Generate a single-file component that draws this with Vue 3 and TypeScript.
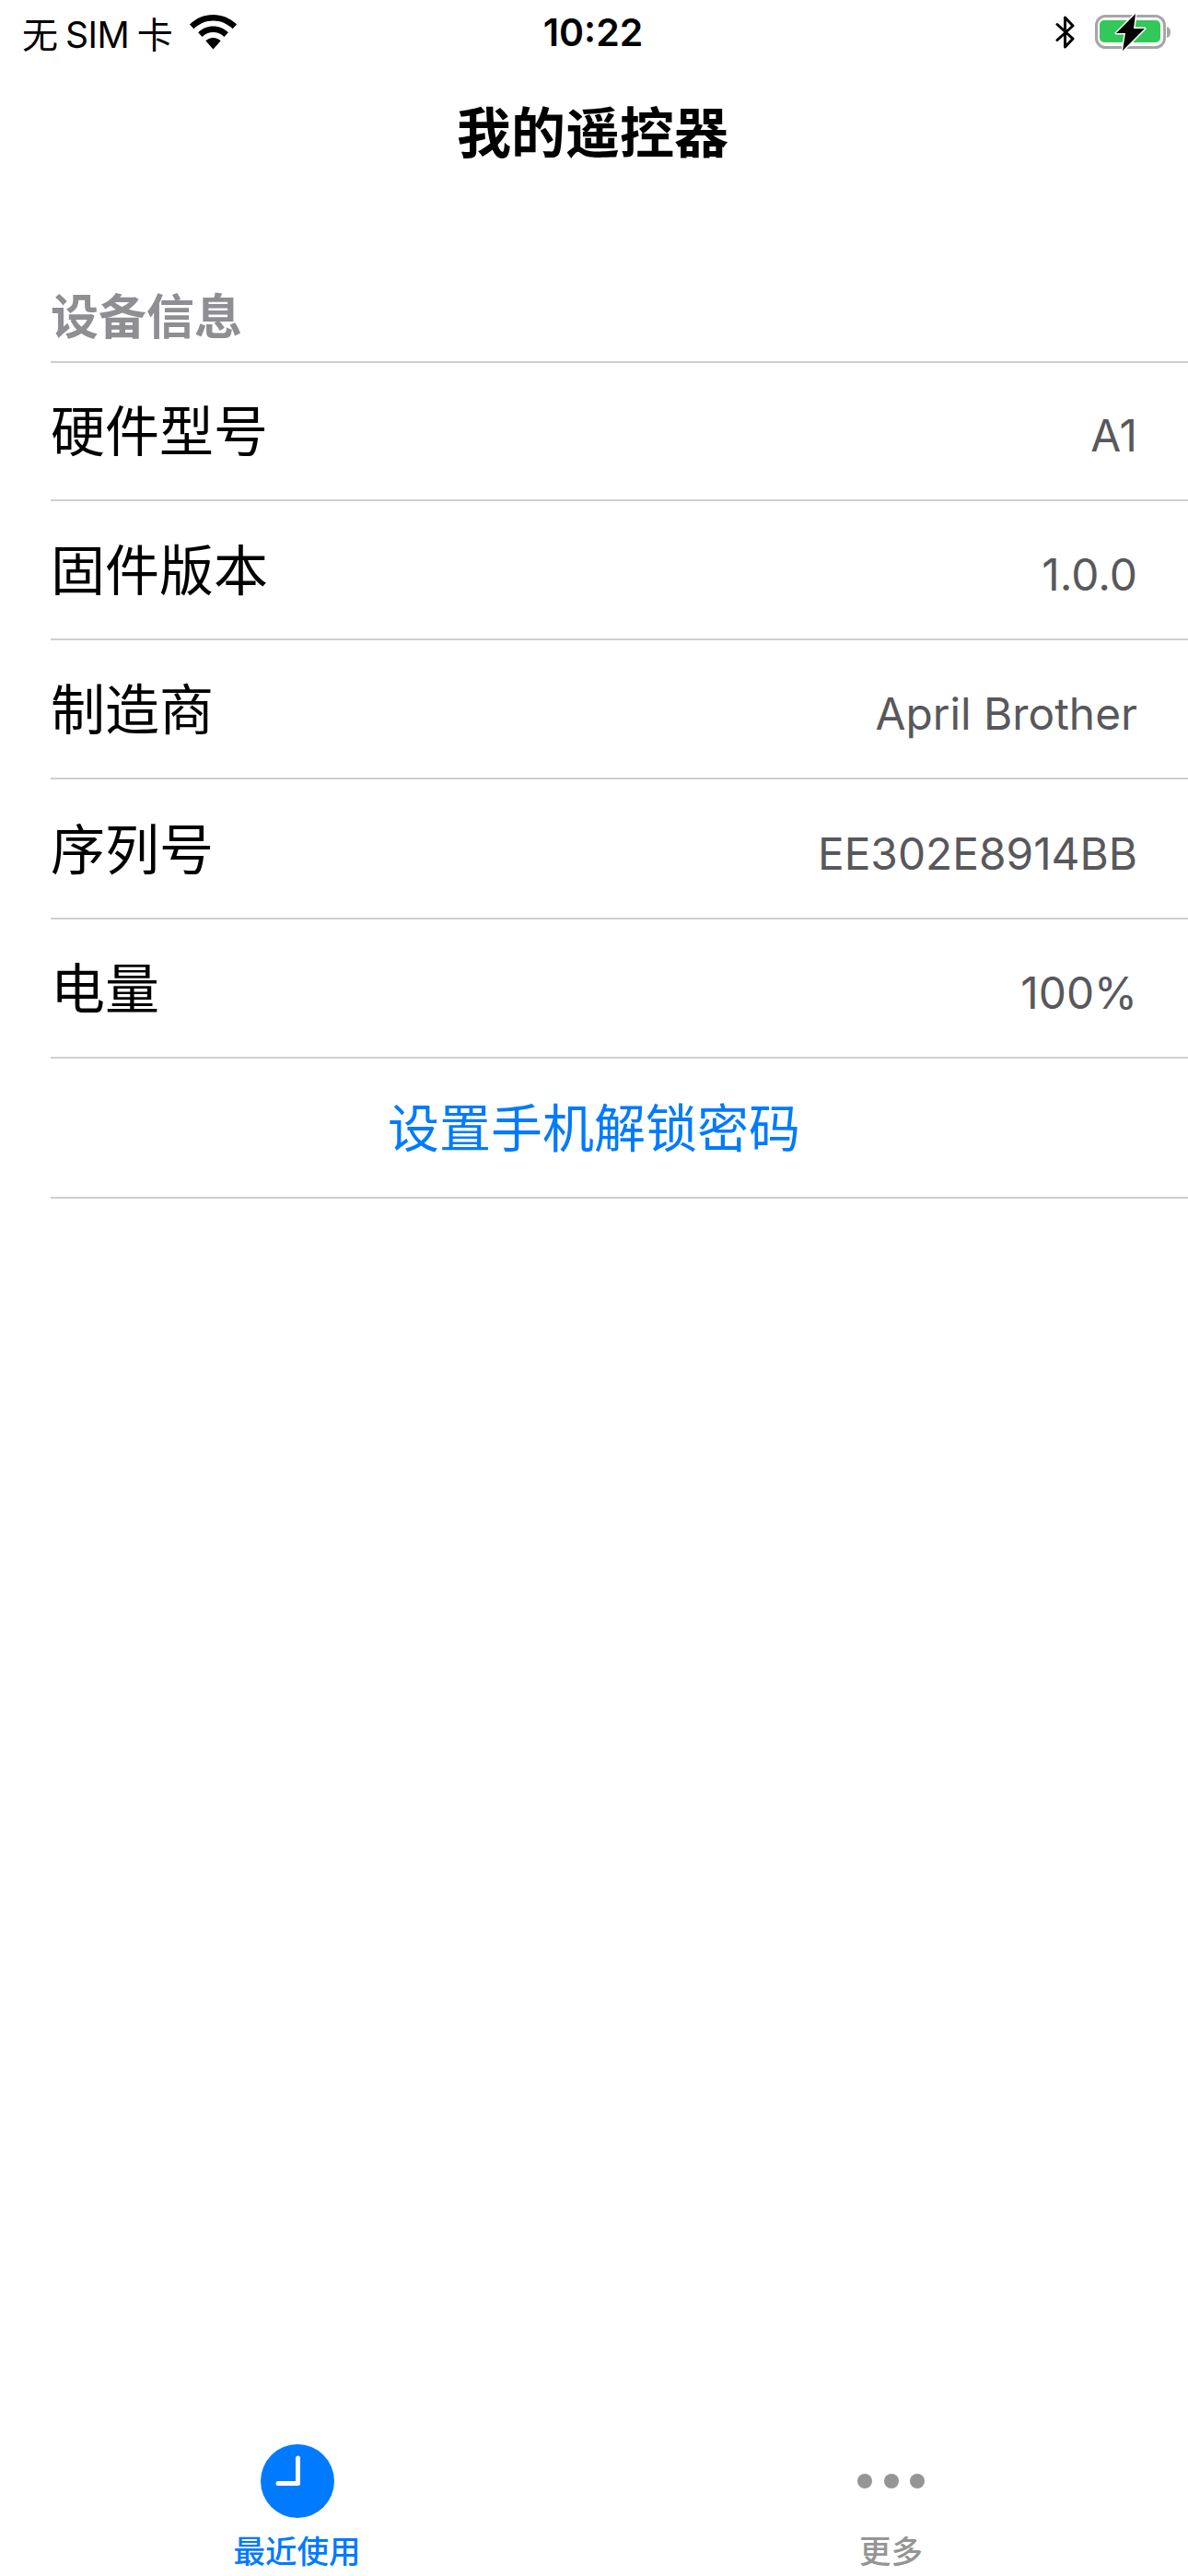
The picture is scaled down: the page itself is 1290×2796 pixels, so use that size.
<script setup lang="ts">
interface InfoRow {
  label: string;
  value: string;
}

const rows: InfoRow[] = [
  { label: "硬件型号", value: "A1" },
  { label: "固件版本", value: "1.0.0" },
  { label: "制造商", value: "April Brother" },
  { label: "序列号", value: "EE302E8914BB" },
  { label: "电量", value: "100%" },
];
</script>

<template>
  <div class="screen">
    <div class="status-bar">
      <div class="status-left">
        <span class="carrier">无 SIM 卡</span>
        <svg class="wifi" width="51" height="38" viewBox="1 0 48 35" preserveAspectRatio="none">
          <path d="M25 0C15.6 0 7.2 3.7 1 9.700l4.100 4.300C10.300 9 17.300 5.900 25 5.900S39.700 9 44.900 14L49 9.700C42.800 3.700 34.400 0 25 0Z" fill="#000" />
          <path d="M25 11.500c-6 0-11.400 2.400-15.400 6.200l4.200 4.300c2.900-2.800 6.900-4.500 11.200-4.500s8.300 1.700 11.200 4.500l4.200-4.300c-4-3.800-9.400-6.200-15.400-6.200Z" fill="#000" />
          <path d="M25 23c-3 0-5.700 1.200-7.700 3.100L25 34.500l7.700-8.400C30.700 24.200 28 23 25 23Z" fill="#000" />
        </svg>
      </div>
      <span class="clock">10:22</span>
      <div class="status-right">
        <svg class="bt" width="22" height="38" viewBox="0 0 22 38">
          <path d="M2 10.500 19 26 10.500 35V3L19 12 2 27.500" fill="none" stroke="#000" stroke-width="3" stroke-linejoin="round" stroke-linecap="round" />
        </svg>
        <svg class="battery" width="84" height="42" viewBox="0 0 84 42">
          <rect x="2.500" y="3.500" width="74" height="34" rx="10" fill="none" stroke="#a6a6a6" stroke-width="3" />
          <rect x="6" y="8" width="66" height="24" rx="5" fill="#34c759" />
          <path d="M79 15c3 .6 4 3 4 6s-1 5.400-4 6Z" fill="#a6a6a6" />
          <path d="M45 1 24 22h10l-3 19 24-24H43Z" fill="#000" stroke="#fff" stroke-width="3" stroke-linejoin="round" paint-order="stroke" />
        </svg>
      </div>
    </div>

    <header class="nav-bar">我的遥控器</header>

    <main class="content">
      <div class="section-title">设备信息</div>
      <div v-for="row in rows" :key="row.label" class="row">
        <span class="row-label">{{ row.label }}</span>
        <span class="row-value">{{ row.value }}</span>
      </div>
      <div class="row row-action">设置手机解锁密码</div>
    </main>

    <nav class="tab-bar">
      <div class="tab tab-active">
        <svg width="80" height="80" viewBox="0 0 80 80">
          <circle cx="40" cy="40" r="40" fill="#007aff" />
          <path d="M40.500 15V42.500H19" fill="none" stroke="#fff" stroke-width="5" stroke-linecap="round" stroke-linejoin="round" />
        </svg>
        <span class="tab-label">最近使用</span>
      </div>
      <div class="tab">
        <svg width="80" height="80" viewBox="0 0 80 80">
          <circle cx="11" cy="40" r="8" fill="#959595" />
          <circle cx="40" cy="40" r="8" fill="#959595" />
          <circle cx="68" cy="40" r="8" fill="#959595" />
        </svg>
        <span class="tab-label">更多</span>
      </div>
    </nav>
  </div>
</template>

<style scoped>
.screen {
  width: 1290px;
  height: 2796px;
  display: flex;
  flex-direction: column;
  background: #fff;
  color: #000;
  font-family: Inter, "Noto Sans CJK SC", sans-serif;
  overflow: hidden;
}

.status-bar {
  height: 70px;
  display: grid;
  grid-template-columns: 1fr auto 1fr;
  align-items: center;
  padding: 0 18px 0 24px;
}

.status-left {
  display: flex;
  align-items: center;
  gap: 19px;
}

.carrier {
  font-size: 39px;
  letter-spacing: -0.5px;
  word-spacing: -2px;
}

.clock {
  font-size: 41px;
  font-weight: 600;
  margin-left: -8px;
}

.status-right {
  display: flex;
  align-items: center;
  justify-content: flex-end;
  gap: 20px;
}

.nav-bar {
  height: 80px;
  display: flex;
  align-items: center;
  justify-content: center;
  font-size: 59px;
  font-weight: 700;
  margin: 30px 3px 0 0;
}

.content {
  flex: 1;
  padding: 128px 0 0 55px;
}

.section-title {
  height: 86px;
  display: flex;
  align-items: center;
  color: #8e8e93;
  font-size: 52px;
  font-weight: 700;
  padding-bottom: 20px;
  box-sizing: border-box;
}

.section-title,
.row {
  border-bottom: 2px solid #cfcfd2;
}

.row {
  height: 151.4px;
  box-sizing: border-box;
  display: flex;
  align-items: center;
  justify-content: space-between;
  padding-right: 55px;
}

.section-title + .row {
  height: 149.6px;
}

.row-label {
  font-size: 59px;
  margin-top: -6px;
}

.row-value {
  font-size: 47.8px;
  color: #58585c;
  margin-top: 11px;
}

.row-action {
  justify-content: center;
  color: #007aff;
  font-size: 56px;
  padding-bottom: 6px;
}

.tab-bar {
  height: 143px;
  display: grid;
  grid-template-columns: 1fr 1fr;
}

.tab {
  display: flex;
  flex-direction: column;
  align-items: center;
  color: #959595;
}

.tab-active {
  color: #007aff;
}

.tab-label {
  font-size: 34.500px;
  font-weight: 500;
  line-height: 40px;
  margin-top: 17px;
}
</style>
